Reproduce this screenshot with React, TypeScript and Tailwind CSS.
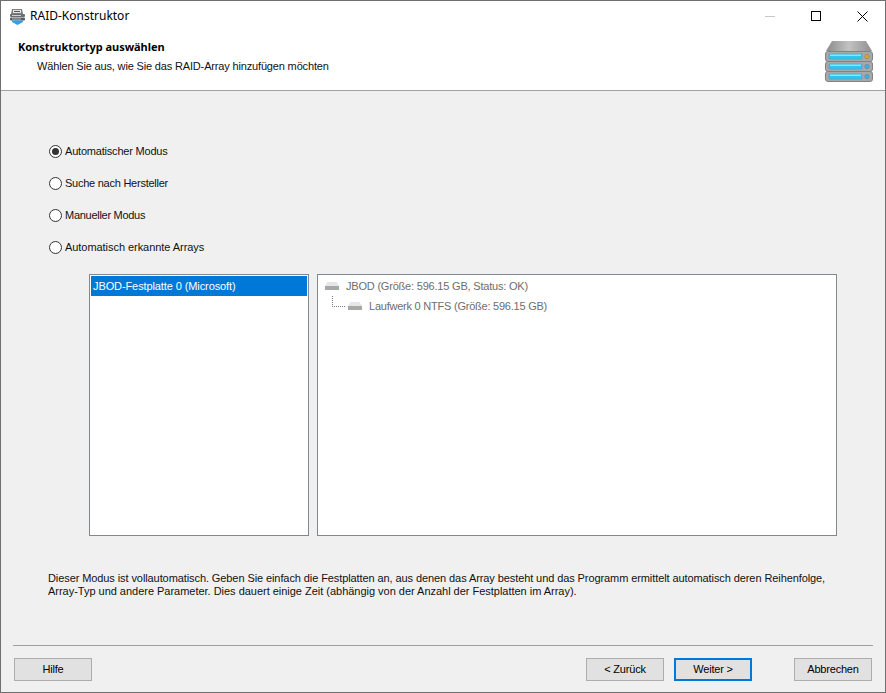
import React from "react";

const font = "[font-family:'Liberation_Sans',sans-serif]";
const notoFont = "[font-family:'Noto_Sans',sans-serif]";

function TitleIcon() {
  return (
    <svg width="17" height="17" viewBox="0 0 17 17" className="shrink-0">
      <path d="M3 1h10l1 5H2z" fill="#7d7d7d" />
      <rect x="4" y="2" width="8" height="3" fill="#e4e4e4" />
      <rect x="5" y="3" width="6" height="1" fill="#555" />
      <rect x="1" y="6" width="15" height="3" rx="1" fill="#6a6e73" />
      <rect x="1" y="9.5" width="15" height="3" rx="1" fill="#585c62" />
      <path d="M3 12.5h11v1.5l-5.5 3-5.5-3z" fill="#2f9fe6" />
      <rect x="3" y="7" width="9" height="1" fill="#c9d2d8" />
      <rect x="3" y="10.5" width="9" height="1" fill="#aeb7bd" />
    </svg>
  );
}

function ServerRow({ led }: { led: string }) {
  return (
    <g>
      <rect x="0.5" y="0.5" width="47" height="10" rx="2.5" fill="#a6a8aa" stroke="#808284" />
      <rect x="4" y="3" width="33" height="5" rx="0.5" fill="#2cc6f4" stroke="#6a94aa" strokeWidth="0.6" />
      <rect x="5" y="3.6" width="31" height="1.2" fill="#a8ecfb" />
      <circle cx="42" cy="5.5" r="2.2" fill={led} stroke="#808284" strokeWidth="0.6" />
    </g>
  );
}

function ServerIcon() {
  return (
    <svg width="48" height="41" viewBox="0 0 48 41" className="shrink-0">
      <defs>
        <linearGradient id="top" x1="0" x2="1" y1="0" y2="0">
          <stop offset="0" stopColor="#8b8b8b" />
          <stop offset="0.5" stopColor="#c2c2c2" />
          <stop offset="1" stopColor="#8f8f8f" />
        </linearGradient>
      </defs>
      <path d="M7 0h34l6 10H1z" fill="url(#top)" />
      <g transform="translate(0 10)"><ServerRow led="#e0a80c" /></g>
      <g transform="translate(0 20)"><ServerRow led="#2fb4ee" /></g>
      <g transform="translate(0 30)"><ServerRow led="#2fb4ee" /></g>
    </svg>
  );
}

function DriveIcon() {
  return (
    <svg width="14" height="8" viewBox="0 0 14 8" className="shrink-0">
      <path d="M2.5 0h9L14 4H0z" fill="#e6e6e6" />
      <rect x="0" y="4" width="14" height="4" fill="#a8a8a8" />
      <rect x="10" y="5.5" width="2" height="1" fill="#6fd06f" />
    </svg>
  );
}

function Radio({ label, checked, tracking }: { label: string; checked?: boolean; tracking: string }) {
  return (
    <div className="flex h-4 items-center gap-[3px]">
      <span className="flex size-[13px] shrink-0 items-center justify-center rounded-full border border-[#333333] bg-white">
        {checked && <span className="size-[7px] rounded-full bg-[#333333]" />}
      </span>
      <span className={tracking}>{label}</span>
    </div>
  );
}

function Btn({ label, primary, className = "" }: { label: string; primary?: boolean; className?: string }) {
  return (
    <button
      className={`flex h-[23px] w-[78px] items-center justify-center bg-[#e1e1e1] tracking-[-0.2px] text-black ${
        primary ? "border-2 border-[#0078d7]" : "border border-[#adadad]"
      } ${className}`}
    >
      {label}
    </button>
  );
}

export default function App() {
  return (
    <div className={`${font} flex h-[693px] w-[886px] flex-col border border-[#6f6f6f] bg-[#f0f0f0] text-[11px] leading-[13px] text-[#111111]`}>
      <div className="flex h-[30px] shrink-0 items-center justify-between bg-white pl-[8px]">
        <div className="flex items-center gap-[4px]">
          <TitleIcon />
          <span className={`${notoFont} text-[12px] leading-[14px] text-black`}>RAID-Konstruktor</span>
        </div>
        <div className="flex items-center">
          <div className="flex h-[30px] w-[46px] items-center justify-center">
            <span className="h-px w-[10px] bg-[#c8c8c8]" />
          </div>
          <div className="flex h-[30px] w-[46px] items-center justify-center">
            <span className="size-[10px] border border-black" />
          </div>
          <div className="flex h-[30px] w-[46px] items-center justify-center">
            <svg width="11" height="11" viewBox="0 0 11 11">
              <path d="M0.5 0.5l10 10M10.5 0.5l-10 10" stroke="#000" strokeWidth="1" fill="none" />
            </svg>
          </div>
        </div>
      </div>

      <div className="flex h-[60px] shrink-0 justify-between border-b border-[#a0a0a0] bg-white pl-[17px] pr-[12px]">
        <div className="pt-[9px]">
          <div className={`${notoFont} font-bold tracking-[-0.03px] text-black`}>Konstruktortyp auswählen</div>
          <div className="pl-[19px] pt-[7px] tracking-[-0.16px] text-[#111111]">Wählen Sie aus, wie Sie das RAID-Array hinzufügen möchten</div>
        </div>
        <div className="pt-[10px]"><ServerIcon /></div>
      </div>

      <div className="flex flex-col gap-4 pl-[48px] pt-[52px]">
        <Radio label="Automatischer Modus" checked tracking="tracking-[-0.2px]" />
        <Radio label="Suche nach Hersteller" tracking="tracking-[-0.25px]" />
        <Radio label="Manueller Modus" tracking="tracking-[-0.28px]" />
        <Radio label="Automatisch erkannte Arrays" tracking="tracking-[-0.05px]" />
      </div>

      <div className="flex gap-2 pl-[88px] pt-[19px]">
        <div className="h-[262px] w-[220px] border border-[#828790] bg-white p-px">
          <div className="h-5 bg-[#0078d7] pl-[2px] leading-[20px] tracking-[-0.1px] text-white">JBOD-Festplatte 0 (Microsoft)</div>
        </div>
        <div className="relative h-[262px] w-[520px] border border-[#828790] bg-white pl-[7px] pt-[3px] text-[#6d6d6d]">
          <div className="flex h-[16px] items-center gap-[7px]">
            <DriveIcon />
            <span className="tracking-[-0.2px]">JBOD (Größe: 596.15 GB, Status: OK)</span>
          </div>
          <div className="flex h-[24px] items-center gap-[7px] pl-[23px]">
            <DriveIcon />
            <span className="tracking-[-0.23px]">Laufwerk 0 NTFS (Größe: 596.15 GB)</span>
          </div>
          <span className="absolute left-[14px] top-[21px] h-[11px] w-[13px] border-b border-l border-dotted border-[#808080]" />
        </div>
      </div>

      <div className="pl-[47px] pt-[36px] text-[#111111]">
        <p className="tracking-[-0.09px]">Dieser Modus ist vollautomatisch. Geben Sie einfach die Festplatten an, aus denen das Array besteht und das Programm ermittelt automatisch deren Reihenfolge,</p>
        <p className="tracking-[-0.02px]">Array-Typ und andere Parameter. Dies dauert einige Zeit (abhängig von der Anzahl der Festplatten im Array).</p>
      </div>

      <div className="mx-[12px] mt-[47px] h-px shrink-0 bg-[#a0a0a0]" />

      <div className="flex items-center pl-[13px] pr-[13px] pt-[12px]">
        <Btn label="Hilfe" />
        <Btn label="< Zurück" className="ml-auto" />
        <Btn label="Weiter >" primary className="ml-[10px]" />
        <Btn label="Abbrechen" className="ml-[42px]" />
      </div>
    </div>
  );
}
